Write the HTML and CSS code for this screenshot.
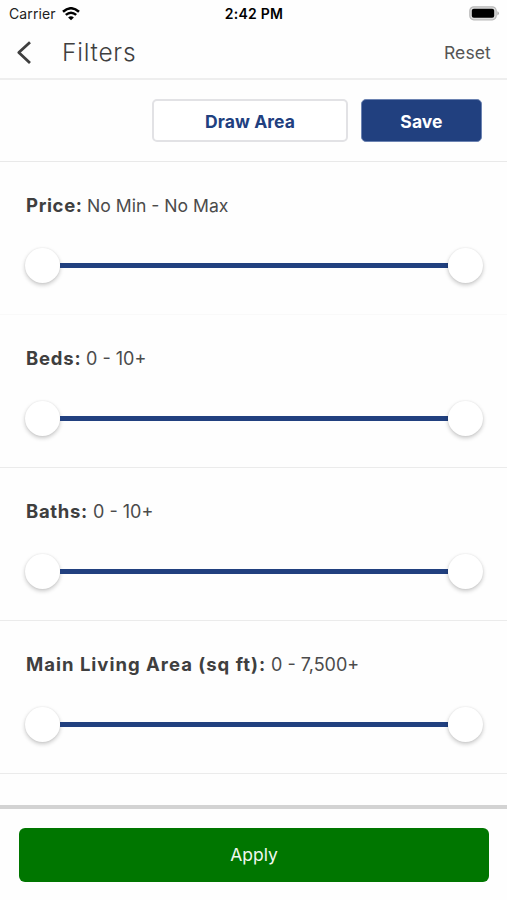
FILE: index.html
```html
<!DOCTYPE html>
<html lang="en">
<head>
<meta charset="utf-8">
<title>Filters</title>
<link rel="stylesheet" href="styles.css">
</head>
<body>
<div class="screen">
  <div class="status">
    <div class="carrier"><span>Carrier</span>
      <svg width="18" height="14" viewBox="0 0 18 14" fill="none" stroke="#000" stroke-width="2.5"><path d="M1 4.8Q9-2.3 17 4.8M3.8 7.9Q9 3.5 14.2 7.9"/><path d="M6.1 10.5Q9 8 11.9 10.5L9 13.3Z" fill="#000" stroke="none"/></svg>
    </div>
    <div class="time">2:42 PM</div>
    <svg class="battery" width="30" height="15" viewBox="0 0 30 15"><rect x=".8" y=".8" width="26.4" height="13" rx="4" fill="#ddd" stroke="#b9b9b9" stroke-width="1.2"/><rect x="2.8" y="2.8" width="22.4" height="9" rx="2" fill="#000"/><path d="M28.4 5.2q1.5.6 1.5 2.1t-1.5 2.1z" fill="#aaa"/></svg>
  </div>
  <header class="header">
    <svg width="16" height="24" viewBox="0 0 16 24" fill="none" stroke="#3f3f3f" stroke-width="2.8" stroke-linejoin="round"><path d="M14 1.2L2.8 11.5 14 22"/></svg>
    <h1>Filters</h1>
    <span class="reset">Reset</span>
  </header>
  <div class="actions">
    <button class="draw">Draw Area</button>
    <button class="save">Save</button>
  </div>
  <main class="filters">
    <section class="filter faint"><p class="label"><b class="price">Price:</b><span class="money">No Min - No Max</span></p><div class="slider"><i></i><em></em><i></i></div></section>
    <section class="filter"><p class="label"><b class="beds">Beds:</b><span>0 - 10+</span></p><div class="slider"><i></i><em></em><i></i></div></section>
    <section class="filter"><p class="label"><b class="baths">Baths:</b><span>0 - 10+</span></p><div class="slider"><i></i><em></em><i></i></div></section>
    <section class="filter"><p class="label"><b class="living">Main Living Area (sq ft):</b><span>0 - 7,500+</span></p><div class="slider"><i></i><em></em><i></i></div></section>
  </main>
  <footer class="footer"><button class="apply">Apply</button></footer>
</div>
</body>
</html>
```

FILE: styles.css
```css
* { box-sizing: border-box; margin: 0; padding: 0; }
body { background: #fefefe; color: #3f3f3f; font-family: Inter, sans-serif; }
button { font-family: inherit; }
.screen { height: 900px; display: flex; flex-direction: column; overflow: hidden; }
.status { height: 27px; flex: none; display: grid; grid-template-columns: 1fr auto 1fr; align-items: center; padding: 0 8px 0 9px; color: #000; font-size: 14px; }
.carrier { display: flex; align-items: center; gap: 6px; color: #222; letter-spacing: .1px; }
.time { font-weight: 600; letter-spacing: .25px; }
.battery { justify-self: end; }
.header { height: 53px; flex: none; display: flex; align-items: center; padding: 0 16px; border-bottom: 2px solid #eee; }
.header h1 { margin-left: 30px; font-size: 24.5px; font-weight: 350; letter-spacing: .75px; line-height: 28px; padding-bottom: 2px; }
.reset { margin-left: auto; font-size: 17.5px; letter-spacing: .15px; color: #555; }
.actions { height: 82px; flex: none; display: flex; justify-content: flex-end; align-items: center; gap: 13px; padding: 0 25px 0 0; border-bottom: 1px solid #e9e9e9; }
.actions button { height: 43px; border-radius: 5px; font-size: 17.5px; font-weight: 700; padding-top: 2px; letter-spacing: .1px; }
.draw { width: 196px; background: #fff; border: 2px solid #e2e2e5; color: #21407f; }
.save { width: 121px; background: #21407f; border: 1px solid #6c83b2; color: #fff; }
.filter { height: 153px; padding: 29px 24px 0 25px; border-bottom: 1px solid #ebebeb; }
.faint { border-bottom-color: #f9f9f9; }
.label { height: 28px; display: flex; align-items: center; padding-left: 1px; font-size: 18px; white-space: nowrap; }
.label b { font-size: 18.5px; font-weight: 700; flex: none; }
.label span { color: #4b4b4b; }
.label .money { font-size: 17.6px; }
.price { width: 61px; letter-spacing: .65px; }
.beds { width: 60px; letter-spacing: .8px; }
.baths { width: 67px; letter-spacing: .65px; }
.living { width: 245px; letter-spacing: 1px; }
.slider { display: flex; align-items: center; margin-top: 29px; height: 35px; }
.slider i { width: 35px; height: 35px; flex: none; border-radius: 50%; background: #fff; box-shadow: 0 2px 4px rgba(0,0,0,.22), 0 0 2px rgba(0,0,0,.07); }
.slider em { flex: 1; height: 5px; background: #21407f; }
.footer { margin-top: auto; height: 95px; flex: none; padding: 19px 18px 0 19px; border-top: 4px solid #d3d3d3; }
.apply { width: 100%; height: 54px; border: 0; border-radius: 6px; background: #007600; color: #f0f8f0; font-size: 17.5px; padding-bottom: 1px; }
```
